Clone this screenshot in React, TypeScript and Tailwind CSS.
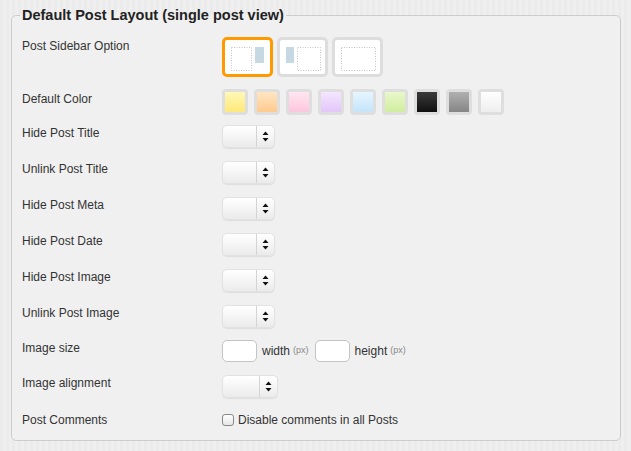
const font = { fontFamily: '"Liberation Sans", Arial, sans-serif' }

const swatches = [
  'bg-[linear-gradient(#fff8b8,#fde878)]',
  'bg-[linear-gradient(#ffe6c4,#ffca8c)]',
  'bg-[linear-gradient(#ffe6f0,#fcc6dc)]',
  'bg-[linear-gradient(#f4e6ff,#e2c6f8)]',
  'bg-[linear-gradient(#e6f5ff,#c4e4fa)]',
  'bg-[linear-gradient(#e8f8cc,#d0ee9c)]',
  'bg-[linear-gradient(#3a3a3a,#111111)]',
  'bg-[linear-gradient(#b0b0b0,#858585)]',
  'bg-[linear-gradient(#ffffff,#eeeeee)]',
]

function Arrows() {
  return (
    <svg width="7" height="11" viewBox="0 0 7 11">
      <path d="M3.5 0.5 L6.5 4 L0.5 4 Z" fill="#111" />
      <path d="M3.5 10.5 L6.5 7 L0.5 7 Z" fill="#111" />
    </svg>
  )
}

function Select({ wide }: { wide?: boolean }) {
  return (
    <div
      className={`flex h-[23px] rounded-[5px] border border-[#e2e2e2] bg-[linear-gradient(#ffffff,#ebebeb)] shadow-[0_1px_1px_rgba(0,0,0,0.08)] ${
        wide ? 'w-[56px]' : 'w-[53px]'
      }`}
    >
      <div className="flex-1 border-r border-[#d4d4d4]" />
      <div className="flex w-[17px] items-center justify-center">
        <Arrows />
      </div>
    </div>
  )
}

function Layout({ kind, active }: { kind: 'right' | 'left' | 'none'; active?: boolean }) {
  return (
    <div
      className={`h-[40px] w-[51px] rounded-[5px] border-[3px] bg-white ${
        active ? 'border-[#ff9900]' : 'border-[#dddddd]'
      }`}
    >
      <svg width="45" height="34" viewBox="0 0 45 34">
        {kind === 'right' && (
          <>
            <rect x="6.5" y="7.5" width="20" height="23" fill="none" stroke="#c4c4c4" strokeDasharray="1 1.5" />
            <rect x="30" y="7" width="9" height="16" fill="#c6d9e3" />
          </>
        )}
        {kind === 'left' && (
          <>
            <rect x="6" y="7" width="8" height="16" fill="#c6d9e3" />
            <rect x="17.5" y="7.5" width="23" height="23" fill="none" stroke="#c4c4c4" strokeDasharray="1 1.5" />
          </>
        )}
        {kind === 'none' && (
          <rect x="6.5" y="7.5" width="34" height="23" fill="none" stroke="#c4c4c4" strokeDasharray="1 1.5" />
        )}
      </svg>
    </div>
  )
}

function Row({ label, children, className, pt }: { label: string; children: React.ReactNode; className: string; pt: string }) {
  return (
    <div className={`flex items-start ${className}`}>
      <div className={`w-[200px] text-[12px] leading-[15px] text-[#333] ${pt}`}>{label}</div>
      {children}
    </div>
  )
}

const selectRows = ['Hide Post Title', 'Unlink Post Title', 'Hide Post Meta', 'Hide Post Date', 'Hide Post Image', 'Unlink Post Image']

export default function App() {
  return (
    <div
      style={font}
      className="h-[451px] w-[631px] bg-[repeating-linear-gradient(90deg,#ebebeb_0px,#ebebeb_3px,#efefef_3px,#efefef_6px)] pl-[11px] pr-[10px] pt-[7px]"
    >
      <fieldset className="h-[434px] rounded-[5px] border border-[#cccccc] bg-[#f0f0f0] pl-[10px]">
        <legend className="-ml-[2px] px-[2px] text-[14.5px] font-bold leading-[17px] text-[#222]">
          Default Post Layout (single post view)
        </legend>
        <div className="flex flex-col">
          <Row label="Post Sidebar Option" className="mt-[13px]" pt="pt-[2px]">
            <div className="flex gap-[4px]">
              <Layout kind="right" active />
              <Layout kind="left" />
              <Layout kind="none" />
            </div>
          </Row>
          <Row label="Default Color" className="mt-[12px]" pt="pt-[3px]">
            <div className="flex gap-[6px]">
              {swatches.map((s, i) => (
                <div key={i} className="h-[26px] w-[26px] rounded-[4px] border-[3px] border-[#dedede]">
                  <div className={`h-full w-full ${s}`} />
                </div>
              ))}
            </div>
          </Row>
          {selectRows.map((l, i) => (
            <Row key={l} label={l} className={i === 0 ? 'mt-[10px]' : 'mt-[13px]'} pt="pt-[1px]">
              <Select />
            </Row>
          ))}
          <Row label="Image size" className="mt-[12px]" pt="pt-[1px]">
            <div className="flex items-center text-[12px] text-[#333]">
              <div className="h-[22px] w-[35px] rounded-[5px] border border-[#c4c4c4] bg-white" />
              <span className="ml-[5px]">width</span>
              <span className="ml-[3px] text-[9px] text-[#888]">(px)</span>
              <div className="ml-[6px] h-[22px] w-[35px] rounded-[5px] border border-[#c4c4c4] bg-white" />
              <span className="ml-[5px]">height</span>
              <span className="ml-[3px] text-[9px] text-[#888]">(px)</span>
            </div>
          </Row>
          <Row label="Image alignment" className="mt-[13px]" pt="pt-[1px]">
            <Select wide />
          </Row>
          <Row label="Post Comments" className="mt-[13px]" pt="pt-[2px]">
            <label className="flex items-center text-[12px] text-[#333]">
              <span className="h-[12px] w-[12px] rounded-[3px] border border-[#888] bg-[linear-gradient(#ffffff,#e6e6e6)]" />
              <span className="ml-[4px]">Disable comments in all Posts</span>
            </label>
          </Row>
        </div>
      </fieldset>
    </div>
  )
}
